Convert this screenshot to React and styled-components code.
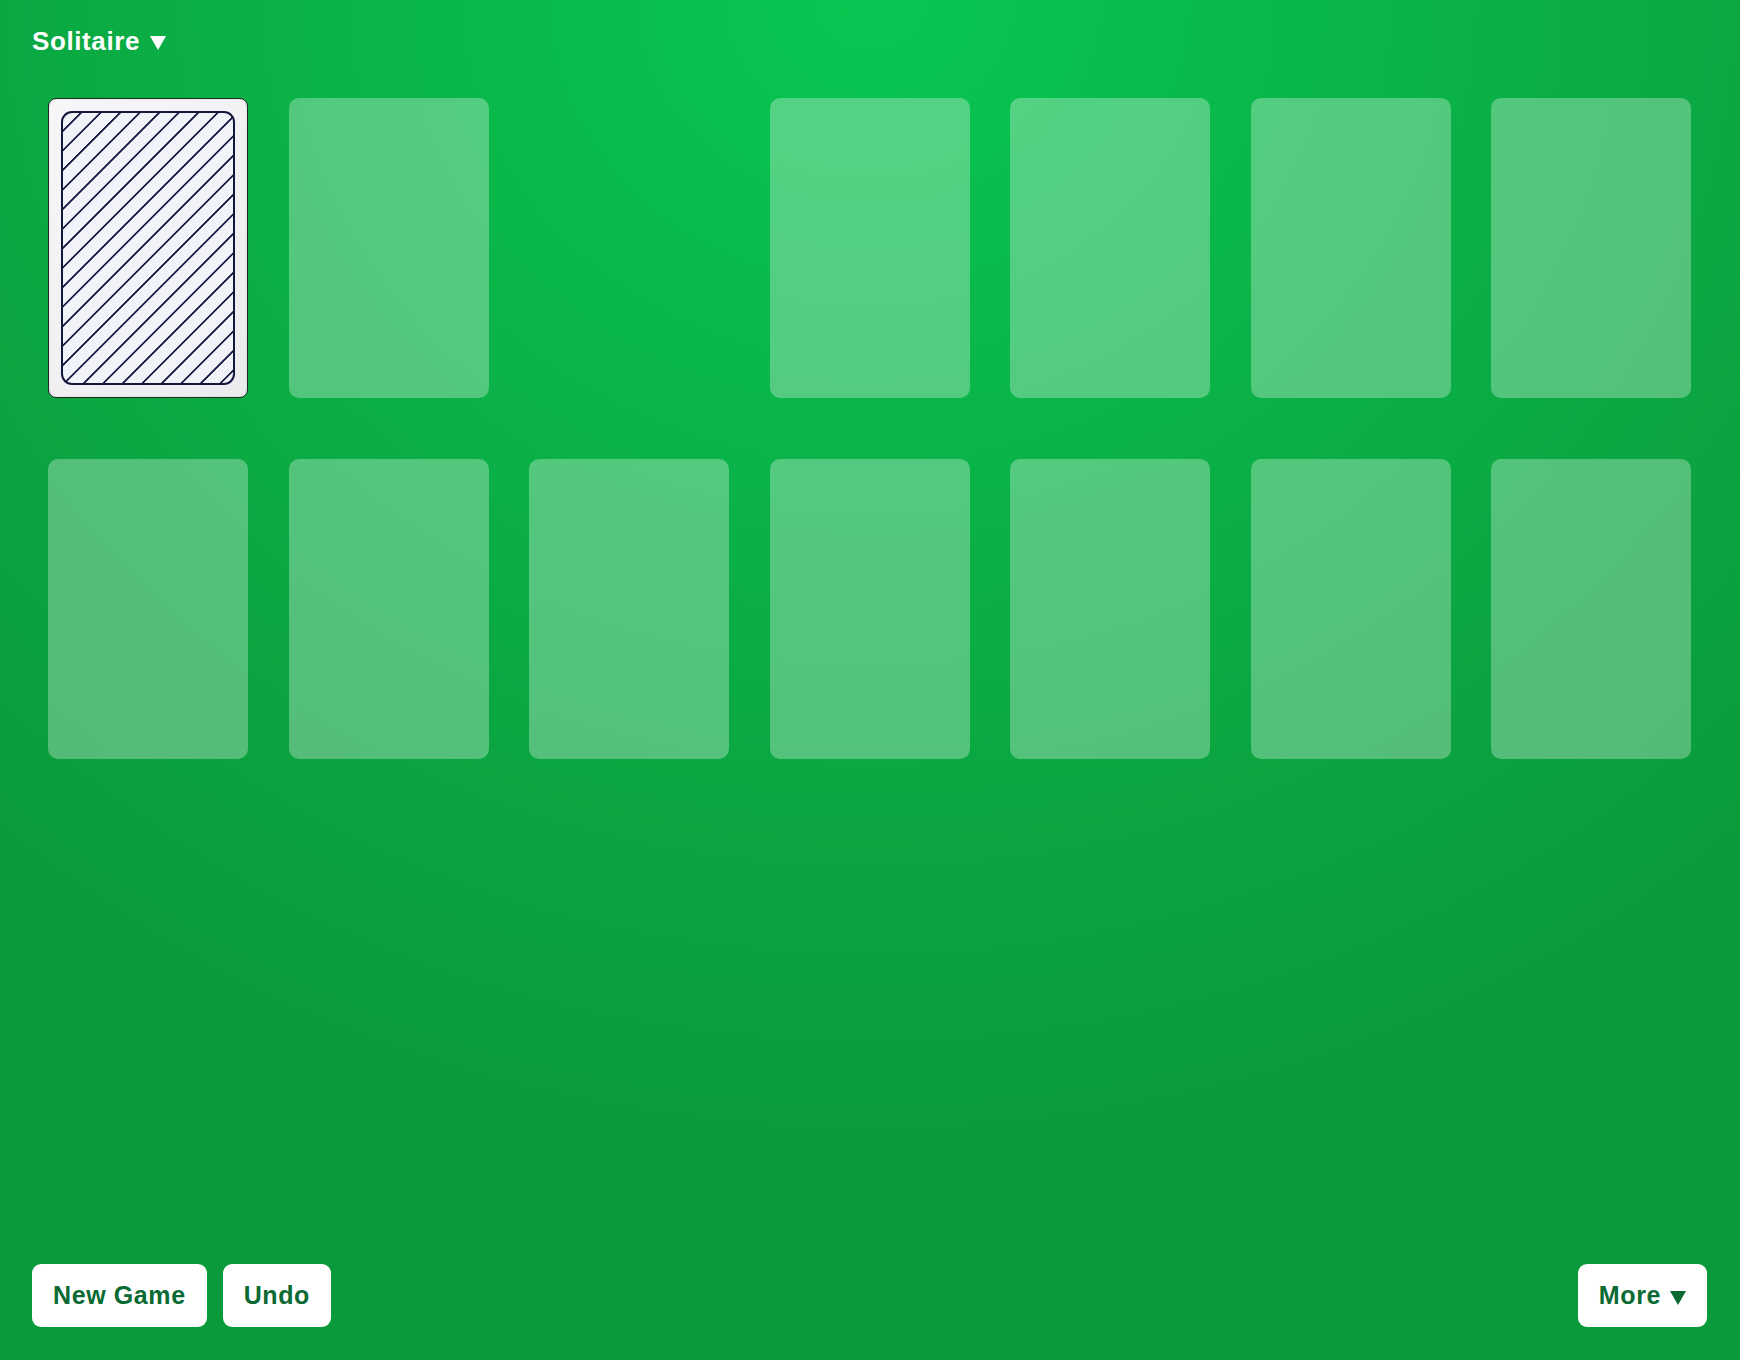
import React from "react";
import styled, { createGlobalStyle } from "styled-components";

const GlobalStyle = createGlobalStyle`
  html, body {
    margin: 0;
    padding: 0;
  }
  body {
    font-family: "Liberation Sans", Arial, sans-serif;
  }
`;

const Table = styled.div`
  display: flex;
  flex-direction: column;
  width: 100%;
  height: 100vh;
  min-height: 1360px;
  box-sizing: border-box;
  background: radial-gradient(
    ellipse 75% 85% at 50% 0%,
    #08c651 0%,
    #0ab448 40%,
    #0ba440 75%,
    #0b9a3b 100%
  );
  overflow: hidden;
`;

const TopBar = styled.div`
  display: flex;
  align-items: center;
  height: 36px;
  padding: 23px 32px 0;
`;

const GameTitle = styled.div`
  display: flex;
  align-items: center;
  gap: 10px;
  color: #ffffff;
  font-size: 26px;
  font-weight: 700;
  letter-spacing: 0.6px;
  cursor: pointer;
`;

const Caret = styled.span`
  display: inline-block;
  width: 0;
  height: 0;
  border-left: ${(p) => p.$size / 2}px solid transparent;
  border-right: ${(p) => p.$size / 2}px solid transparent;
  border-top: ${(p) => p.$size * 0.9}px solid ${(p) => p.$color};
  margin-top: 4px;
`;

const Board = styled.div`
  display: grid;
  grid-template-columns: repeat(7, 200px);
  justify-content: space-between;
  row-gap: 61px;
  padding: 39px 49px 0 48px;
`;

const Slot = styled.div`
  height: 300px;
  border-radius: 10px;
  background: rgba(255, 255, 255, 0.3);
  visibility: ${(p) => (p.$empty ? "hidden" : "visible")};
`;

const CardBack = styled.div`
  height: 300px;
  box-sizing: border-box;
  padding: 12px;
  border-radius: 8px;
  border: 1.5px solid #1f2a24;
  background: linear-gradient(135deg, #f7f7f9 0%, #ececef 100%);
  box-shadow: inset 0 0 2px rgba(0, 0, 0, 0.15);
`;

// diagonal hatch on the back of the stock card
const CardPattern = styled.div`
  height: 100%;
  box-sizing: border-box;
  border: 2px solid #15173d;
  border-radius: 11px;
  background-color: #f2f3f8;
  background-image: repeating-linear-gradient(
    135deg,
    rgba(26, 28, 70, 0) 0px,
    rgba(26, 28, 70, 0) 11.4px,
    #1a1c46 12px,
    #1a1c46 13.2px,
    rgba(26, 28, 70, 0) 13.8px
  );
`;

const Spacer = styled.div`
  flex: 1;
`;

const BottomBar = styled.div`
  display: flex;
  align-items: center;
  justify-content: space-between;
  padding: 0 33px 33px 32px;
`;

const ButtonGroup = styled.div`
  display: flex;
  gap: 16px;
`;

const Button = styled.button`
  display: flex;
  align-items: center;
  gap: 9px;
  height: 63px;
  padding: 0 21px;
  border: none;
  border-radius: 9px;
  background: #ffffff;
  color: #0b6a34;
  font-family: "Liberation Sans", Arial, sans-serif;
  font-size: 25px;
  font-weight: 700;
  letter-spacing: 0.6px;
  cursor: pointer;
`;

export default function App() {
  const foundationRow = [true, true, false, true, true, true, true];
  return (
    <>
      <GlobalStyle />
      <Table>
        <TopBar>
          <GameTitle>
            Solitaire
            <Caret $size={16} $color="#ffffff" />
          </GameTitle>
        </TopBar>
        <Board>
          <CardBack>
            <CardPattern />
          </CardBack>
          {foundationRow.slice(1).map((shown, i) => (
            <Slot key={"f" + i} $empty={!shown} />
          ))}
          {Array.from({ length: 7 }).map((_, i) => (
            <Slot key={"t" + i} />
          ))}
        </Board>
        <Spacer />
        <BottomBar>
          <ButtonGroup>
            <Button>New Game</Button>
            <Button>Undo</Button>
          </ButtonGroup>
          <Button>
            More
            <Caret $size={16} $color="#0b6a34" />
          </Button>
        </BottomBar>
      </Table>
    </>
  );
}
